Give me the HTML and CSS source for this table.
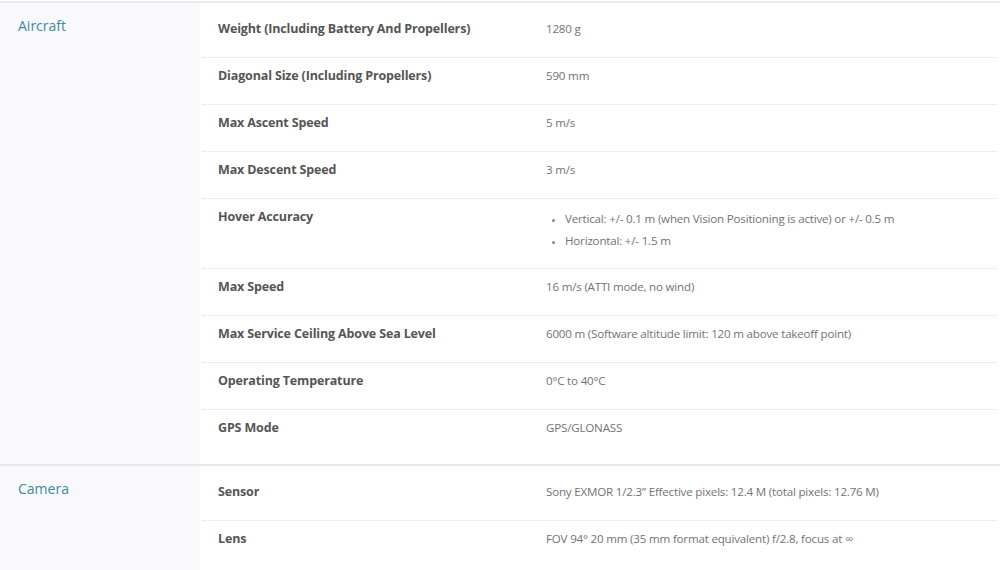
FILE: index.html
```html
<!DOCTYPE html>
<html lang="en">
<head>
<meta charset="utf-8">
<title>Specs</title>
<link rel="stylesheet" href="styles.css">
</head>
<body>
<div class="specs">
  <section class="group">
    <h3 class="group-title">Aircraft</h3>
    <div class="rows">
      <div class="row"><div class="label">Weight (Including Battery And Propellers)</div><div class="value">1280 g</div></div>
      <div class="row"><div class="label">Diagonal Size (Including Propellers)</div><div class="value">590 mm</div></div>
      <div class="row"><div class="label">Max Ascent Speed</div><div class="value">5 m/s</div></div>
      <div class="row"><div class="label">Max Descent Speed</div><div class="value">3 m/s</div></div>
      <div class="row"><div class="label">Hover Accuracy</div><div class="value"><ul class="bullets"><li>Vertical: +/- 0.1 m (when Vision Positioning is active) or +/- 0.5 m</li><li>Horizontal: +/- 1.5 m</li></ul></div></div>
      <div class="row"><div class="label">Max Speed</div><div class="value">16 m/s (ATTI mode, no wind)</div></div>
      <div class="row"><div class="label">Max Service Ceiling Above Sea Level</div><div class="value">6000 m (Software altitude limit: 120 m above takeoff point)</div></div>
      <div class="row"><div class="label">Operating Temperature</div><div class="value">0°C to 40°C</div></div>
      <div class="row"><div class="label">GPS Mode</div><div class="value">GPS/GLONASS</div></div>
    </div>
  </section>
  <section class="group">
    <h3 class="group-title">Camera</h3>
    <div class="rows">
      <div class="row"><div class="label">Sensor</div><div class="value">Sony EXMOR 1/2.3” Effective pixels: 12.4 M (total pixels: 12.76 M)</div></div>
      <div class="row"><div class="label">Lens</div><div class="value">FOV 94° 20 mm (35 mm format equivalent) f/2.8, focus at ∞</div></div>
    </div>
  </section>
</div>
</body>
</html>
```
FILE: styles.css
```css
* { box-sizing: border-box; }
html, body { margin: 0; padding: 0; background: #fff; }
body { font-family: "Open Sans", "Liberation Sans", sans-serif; }

.specs {
  margin-top: 1px;
  border-top: 2px solid #ebebeb;
}

.group {
  display: flex;
  border-bottom: 2px solid #e8e8e8;
}

.group-title {
  flex: 0 0 200px;
  margin: 0;
  padding: 13px 0 0 18px;
  background: #f9f9fb;
  font-size: 14px;
  line-height: 20px;
  font-weight: 400;
  color: #3a8ba3;
}

.rows {
  flex: 1;
  padding: 8px 3px 8px 3px;
}

.row {
  display: flex;
  padding: 7px 0 17px 15px;
  border-bottom: 1px dotted #e0e0e0;
}
.row:last-child { border-bottom: none; }

.label {
  flex: 0 0 328px;
  font-size: 12.5px;
  letter-spacing: -0.15px;
  line-height: 22px;
  font-weight: 700;
  color: #555;
}

.value {
  flex: 1;
  font-size: 11.6px;
  letter-spacing: -0.2px;
  line-height: 22px;
  color: #737373;
}

.bullets {
  margin: 0 0 -1px;
  padding: 2px 0 0 19px;
  list-style: disc;
}
.bullets li::marker { font-size: 9px; color: #888; }
```
